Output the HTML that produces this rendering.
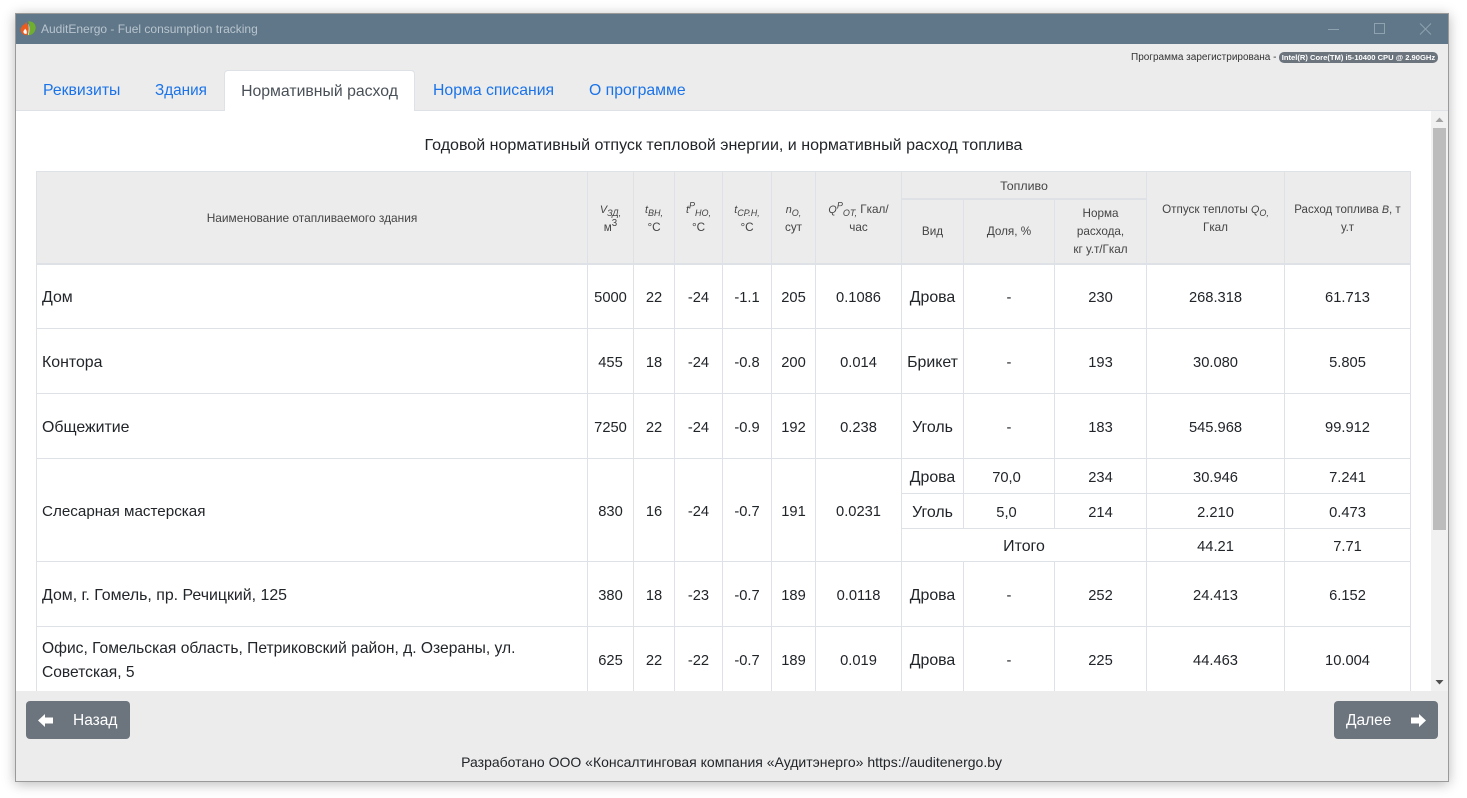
<!DOCTYPE html>
<html lang="ru"><head><meta charset="utf-8"><title>AuditEnergo - Fuel consumption tracking</title>
<style>
*{box-sizing:border-box}
html,body{margin:0;padding:0;width:1467px;height:798px;overflow:hidden;background:#fff;font-family:"Liberation Sans",sans-serif;color:#212529}
#win{position:absolute;left:15px;top:13px;width:1434px;height:769px;background:#ececec;border:1px solid #9a9a9a;box-shadow:0 2px 12px rgba(0,0,0,.28)}
.a{position:absolute;white-space:nowrap}
#bar{left:0;top:0;width:1432px;height:30px;background:#5f7788}
#main{left:0;top:96px;width:1432px;height:581px;background:#fff;border-top:1px solid #dee2e6;overflow:hidden}
.tab{font-size:15.8px;color:#1a73e8;top:65px;height:24px;line-height:24px}
#atab{left:208px;top:56px;width:191px;height:41px;background:#fff;border:1px solid #dee2e6;border-bottom:0;border-radius:4px 4px 0 0;font-size:15.8px;color:#495057;text-align:center;line-height:41px;z-index:2}
table{position:absolute;left:20px;top:60px;border-collapse:collapse;table-layout:fixed;width:1374px}
td,th{border:1px solid #dee2e6;padding:4px 2px 0;text-align:center;vertical-align:middle;font-size:14.7px;font-weight:400;line-height:24px;overflow:hidden}
td.t{font-size:15.9px}
th{background:#ececec;font-size:11.7px;line-height:18px;color:#444;padding-top:2px}
th.p{padding-top:4px}
th i{font-size:10.8px}
sub,sup{line-height:0}
td.l{text-align:left;padding-left:5px}
td.n{padding-right:7px}
.btn{background:#6c757d;color:#fff;border-radius:4px;width:104px;height:38px;top:687px;font-size:15.5px;line-height:40px}
</style></head><body>
<div id="win">
 <div class="a" id="bar"></div>
 <svg class="a" style="left:4px;top:6px" width="16" height="17" viewBox="0 0 16 17"><path d="M8 1.500C12.500 .8 16.200 4 15.600 8.500C15.200 12 12.500 15.200 8.500 15.300C10.500 11 10.800 6 8 1.500Z" fill="#6fae2f"/><path d="M8.300 3.500C9.800 6 10.200 10 8.800 14.800L7.800 15.200C8.800 11 8.800 7 8.300 3.500Z" fill="#dbe8b5"/><path d="M6 1.800C7.600 5 8.800 6.500 8.600 9.800C8.500 12 7.900 14 6.900 15.300C3 15.200 .3 12.500 .5 9.300C.8 7.300 2.300 6.600 2.800 5C4.300 5 5.500 3.800 6 1.800Z" fill="#ec5a1c"/><path d="M5 8.500C6.500 10.200 7.200 11.500 6.700 13.600C5.300 14.400 3.400 13.500 3.400 11.800C3.400 10.600 4.600 10.200 5 8.500Z" fill="#fff"/></svg>
 <div class="a" style="left:25px;top:7px;font-size:12px;line-height:16px;color:#b9c5cf">AuditEnergo - Fuel consumption tracking</div>
 <svg class="a" style="left:1300px;top:6px" width="125" height="18" viewBox="0 0 125 18" fill="none" stroke="#8fa2b0" stroke-width="1"><path d="M12 9.500H23"/><rect x="58.500" y="3.500" width="10" height="10"/><path d="M104 3.500L115 14.500M115 3.500L104 14.500"/></svg>

 <div class="a" style="left:1115px;top:38px;font-size:10px;line-height:12px;color:#333">Программа зарегистрирована -</div>
 <div class="a" style="left:1263px;top:38px;width:159px;height:11px;background:#6c757d;border-radius:5px;color:#fff;font-size:7.6px;font-weight:700;line-height:11px;text-align:center">Intel(R) Core(TM) i5-10400 CPU @ 2.90GHz</div>

 <div class="a tab" style="left:27px">Реквизиты</div>
 <div class="a tab" style="left:139px;font-size:15.300px">Здания</div>
 <div class="a tab" style="left:417px">Норма списания</div>
 <div class="a tab" style="left:573px">О программе</div>

 <div class="a" id="main">
  <div class="a" style="left:0;top:24px;width:1415px;text-align:center;font-size:16.050px;line-height:20px;color:#212529">Годовой нормативный отпуск тепловой энергии, и нормативный расход топлива</div>
  <table>
   <colgroup><col style="width:551px"><col style="width:46px"><col style="width:41px"><col style="width:48px"><col style="width:49px"><col style="width:44px"><col style="width:86px"><col style="width:62px"><col style="width:91px"><col style="width:92px"><col style="width:138px"><col style="width:126px"></colgroup>
   <tr style="height:27px">
    <th rowspan="2" style="font-size:11.900px">Наименование отапливаемого здания</th>
    <th rowspan="2" class="p"><i>V<sub>ЗД,</sub></i><br>м<sup>3</sup></th>
    <th rowspan="2" class="p"><i>t<sub>ВН,</sub></i><br>°C</th>
    <th rowspan="2" class="p"><i>t<sup>Р</sup><sub>НО,</sub></i><br>°C</th>
    <th rowspan="2" class="p"><i>t<sub>СР.Н,</sub></i><br>°C</th>
    <th rowspan="2" class="p"><i>n<sub>О,</sub></i><br>сут</th>
    <th rowspan="2" class="p"><i>Q<sup>Р</sup><sub>ОТ,</sub></i> Гкал/<br>час</th>
    <th colspan="3" style="border-bottom-width:2px;font-size:12.400px">Топливо</th>
    <th rowspan="2" class="p">Отпуск теплоты <i>Q<sub>О,</sub></i><br>Гкал</th>
    <th rowspan="2" class="p" style="font-size:11.500px">Расход топлива <i>B</i>, т<br>у.т</th>
   </tr>
   <tr style="height:65px;border-bottom:2px solid #dee2e6">
    <th>Вид</th><th>Доля, %</th><th>Норма<br>расхода,<br>кг у.т/Гкал</th>
   </tr>
   <tr style="height:65px"><td class="l t">Дом</td><td>5000</td><td>22</td><td>-24</td><td>-1.1</td><td>205</td><td>0.1086</td><td class="t">Дрова</td><td>-</td><td>230</td><td>268.318</td><td>61.713</td></tr>
   <tr style="height:65px"><td class="l t">Контора</td><td>455</td><td>18</td><td>-24</td><td>-0.8</td><td>200</td><td>0.014</td><td class="t">Брикет</td><td>-</td><td>193</td><td>30.080</td><td>5.805</td></tr>
   <tr style="height:65px"><td class="l t">Общежитие</td><td>7250</td><td>22</td><td>-24</td><td>-0.9</td><td>192</td><td>0.238</td><td class="t">Уголь</td><td>-</td><td>183</td><td>545.968</td><td>99.912</td></tr>
   <tr style="height:35px"><td class="l" rowspan="3" style="font-size:15.200px">Слесарная мастерская</td><td rowspan="3">830</td><td rowspan="3">16</td><td rowspan="3">-24</td><td rowspan="3">-0.7</td><td rowspan="3">191</td><td rowspan="3">0.0231</td><td class="t">Дрова</td><td class="n">70,0</td><td>234</td><td>30.946</td><td>7.241</td></tr>
   <tr style="height:35px"><td class="t">Уголь</td><td class="n">5,0</td><td>214</td><td>2.210</td><td>0.473</td></tr>
   <tr style="height:33px"><td colspan="3" class="t">Итого</td><td>44.21</td><td>7.71</td></tr>
   <tr style="height:65px"><td class="l t">Дом, г. Гомель, пр. Речицкий, 125</td><td>380</td><td>18</td><td>-23</td><td>-0.7</td><td>189</td><td>0.0118</td><td class="t">Дрова</td><td>-</td><td>252</td><td>24.413</td><td>6.152</td></tr>
   <tr style="height:65px"><td class="l" style="font-size:15.600px">Офис, Гомельская область, Петриковский район, д. Озераны, ул.<br>Советская, 5</td><td>625</td><td>22</td><td>-22</td><td>-0.7</td><td>189</td><td>0.019</td><td class="t">Дрова</td><td>-</td><td>225</td><td>44.463</td><td>10.004</td></tr>
  </table>
  <div class="a" style="left:1415px;top:0;width:17px;height:581px;background:#f1f1f1"></div>
  <div class="a" style="left:1417px;top:17px;width:13px;height:402px;background:#bcbcbc"></div>
  <svg class="a" style="left:1415px;top:0" width="17" height="580" viewBox="0 0 17 580"><path d="M4.500 11L8.500 6.500L12.500 11Z" fill="#a3a3a3"/><path d="M4.500 569L8.500 573.500L12.500 569Z" fill="#505050"/></svg>
 </div>
 <div class="a" id="atab">Нормативный расход</div>

 <div class="a btn" style="left:10px">
  <svg class="a" style="left:12px;top:13px" width="15" height="13" viewBox="0 0 15 13"><path d="M7 0L0 6.500L7 13V9.500H15V3.500H7Z" fill="#fff"/></svg>
  <span class="a" style="left:47px;top:0">Назад</span>
 </div>
 <div class="a btn" style="left:1318px">
  <span class="a" style="left:12px;top:0">Далее</span>
  <svg class="a" style="left:77px;top:13px" width="15" height="13" viewBox="0 0 15 13"><path d="M8 0L15 6.500L8 13V9.500H0V3.500H8Z" fill="#fff"/></svg>
 </div>
 <div class="a" style="left:0;top:739px;width:986px;text-align:right;font-size:14px;line-height:18px;color:#212529">Разработано ООО «Консалтинговая компания «Аудитэнерго» https://auditenergo.by</div>
</div>
</body></html>
